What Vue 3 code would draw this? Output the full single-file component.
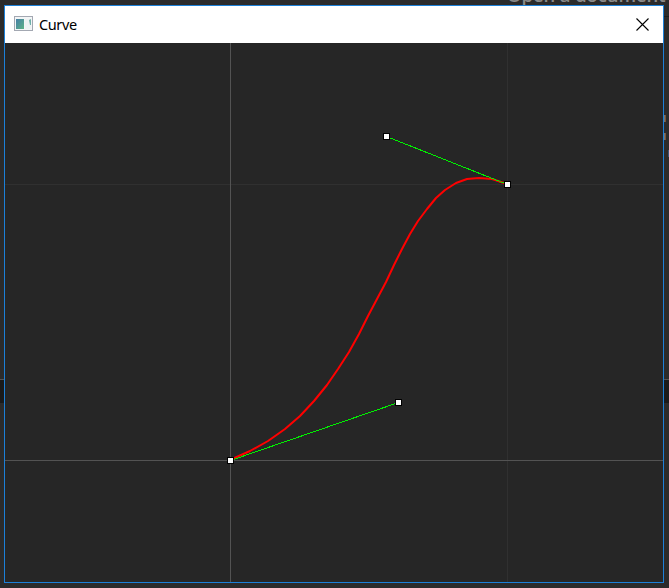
<script setup>
const start = { x: 230, y: 460 }
const c1 = { x: 398, y: 402 }
const c2 = { x: 386, y: 136 }
const end = { x: 507, y: 184 }
const nodes = [start, c1, c2, end]
const steps = 24

// Sample the cubic at whole-pixel positions
const curve = Array.from({ length: steps + 1 }, (_, i) => {
  const t = i / steps
  const u = 1 - t
  const at = (k) =>
    Math.floor(u * u * u * start[k] + 3 * u * u * t * c1[k] + 3 * u * t * t * c2[k] + t * t * t * end[k])
  return `${at('x')},${at('y')}`
}).join(' ')
</script>

<template>
  <div class="desktop">
    <div class="behind">Open a document</div>
    <i class="strip left"></i>
    <i class="strip right"></i>
    <i class="rule"></i>
    <i class="mark first"></i>
    <i class="mark second"></i>
    <i class="mark third"></i>
    <section class="window">
      <header class="titlebar">
        <svg class="app-icon" width="19" height="16" viewBox="0 0 19 16">
          <defs>
            <linearGradient id="pane" x1="0" y1="0" x2="1" y2="1">
              <stop offset="0" stop-color="#467fa6" />
              <stop offset="1" stop-color="#5cb286" />
            </linearGradient>
          </defs>
          <rect x="0.5" y="0.5" width="18" height="14" fill="#f3f5f6" stroke="#a3a8b2" />
          <rect x="2" y="3" width="8" height="10" fill="url(#pane)" />
          <rect x="11" y="3" width="6" height="10" fill="#edf2f3" />
          <path d="M15 4l2 -1v6h-1z" fill="#6fb0aa" />
        </svg>
        <span class="title">Curve</span>
        <svg class="close" width="13" height="13" viewBox="0 0 13 13">
          <path d="M0.5 0.5L12.5 12.5M12.5 0.5L0.5 12.5" stroke="#000" stroke-width="1.1" />
        </svg>
      </header>
      <svg class="canvas" width="658" height="539" viewBox="5 43 658 539">
        <g shape-rendering="crispEdges">
          <path d="M507.5 43V582M5 184.5H663" stroke="#303030" />
          <path d="M230.5 43V582M5 460.5H663" stroke="#535353" />
        </g>
        <polyline :points="curve" fill="none" stroke="#ff0000" stroke-width="2" stroke-linejoin="round" />
        <path
          d="M230.5 460.5L398.5 402.5M386.5 136.5L507.5 184.5"
          stroke="#00f000"
          stroke-width="1"
          shape-rendering="crispEdges"
        />
        <rect
          v-for="(n, i) in nodes"
          :key="i"
          :x="n.x - 2.5"
          :y="n.y - 2.5"
          width="6"
          height="6"
          fill="#fff"
          stroke="#000"
        />
      </svg>
    </section>
  </div>
</template>

<style>
body {
  margin: 0;
}
</style>

<style scoped>
.desktop {
  position: relative;
  box-sizing: border-box;
  width: 669px;
  height: 588px;
  padding: 5px 5px 5px 4px;
  overflow: hidden;
  background: #2b2b2b;
}
.behind {
  position: absolute;
  left: 507px;
  top: -16px;
  white-space: nowrap;
  font: 600 18.5px/22px "Open Sans", sans-serif;
  letter-spacing: -0.1px;
  color: #8a8a8a;
}
.strip {
  position: absolute;
  top: 379px;
  height: 23px;
  background: #1a1a1a;
  border-top: 1px solid #555;
}
.strip.left {
  left: 0;
  width: 4px;
}
.strip.right {
  left: 664px;
  width: 5px;
}
.rule {
  position: absolute;
  left: 664px;
  top: 16px;
  width: 5px;
  height: 1px;
  background: #1c1c1c;
}
.mark {
  position: absolute;
  left: 664px;
  width: 2px;
  height: 7px;
  background: linear-gradient(90deg, #77736c 50%, #795638 50%);
}
.mark.first {
  top: 115px;
}
.mark.second {
  top: 133px;
}
.mark.third {
  left: 668px;
  top: 150px;
  width: 1px;
  background: #3c5374;
}
.window {
  position: relative;
  box-sizing: border-box;
  width: 660px;
  height: 578px;
  border: 1px solid #1c80d8;
  background: #262626;
}
.titlebar {
  display: flex;
  align-items: center;
  box-sizing: border-box;
  height: 37px;
  padding: 0 14px 1px 9px;
  background: #fff;
}
.title {
  flex: 1;
  margin-left: 6px;
  font: 14.5px/20px "Noto Sans", sans-serif;
  letter-spacing: -0.4px;
  color: #000;
}
.app-icon,
.close,
.canvas {
  display: block;
}
</style>
